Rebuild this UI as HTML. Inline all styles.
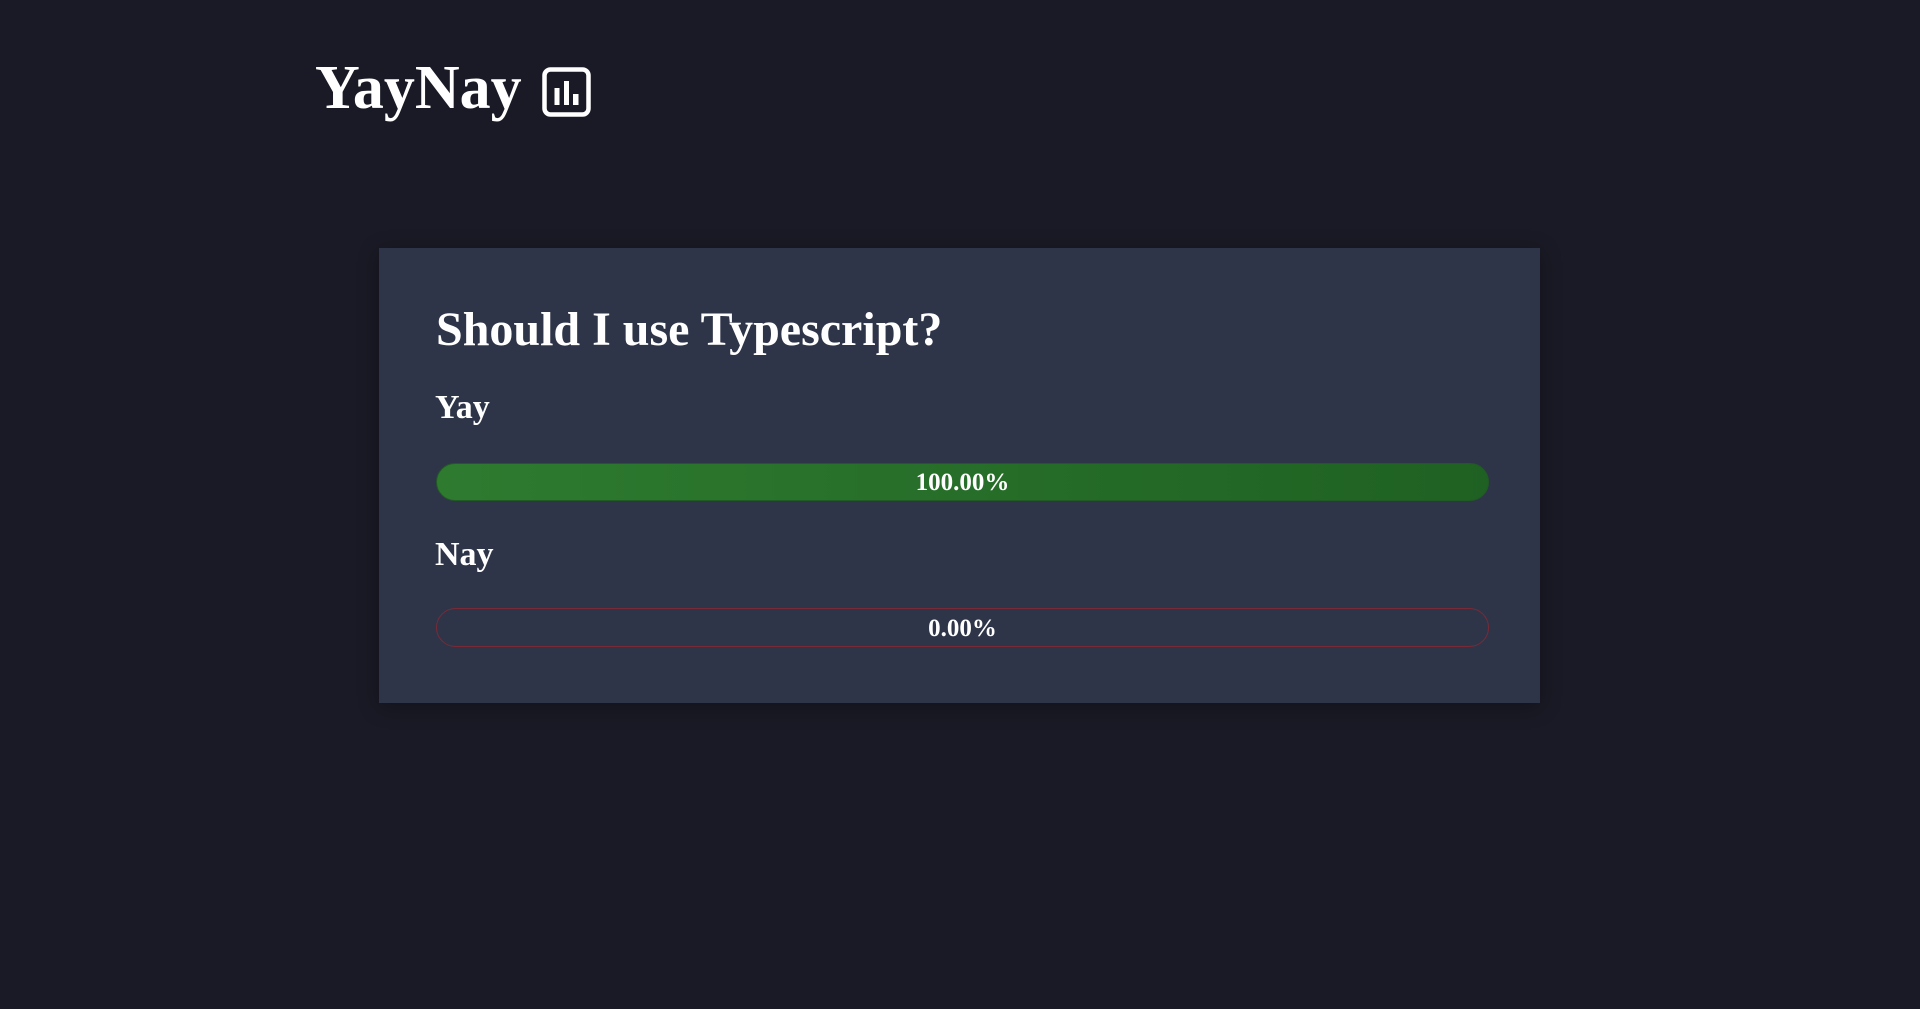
<!DOCTYPE html>
<html><head><meta charset="utf-8"><style>
html,body{margin:0;padding:0;width:1920px;height:1009px;background:#191a25;overflow:hidden;font-family:"Liberation Serif",serif;color:#fff}
.abs{position:absolute}
.logo{left:315px;top:48px;font-size:62px;font-weight:bold;line-height:80px}
.card{left:379px;top:248px;width:1161px;height:455px;background:#2e3548;box-shadow:0 4px 20px rgba(0,0,0,.3)}
.t{font-weight:bold;white-space:nowrap}
.bar{left:436px;width:1053px;border-radius:20px;text-align:center;font-weight:bold;font-size:25px;box-sizing:border-box}
</style></head><body>
<div class="abs logo t">YayNay</div>
<svg class="abs" style="left:541px;top:66px" width="51" height="51" viewBox="0 0 51 51">
<rect x="3.5" y="3.5" width="44" height="45" rx="6" fill="none" stroke="#fff" stroke-width="4.5"/>
<rect x="13.5" y="22" width="5" height="17" fill="#fff"/>
<rect x="23" y="15" width="5" height="24" fill="#fff"/>
<rect x="32" y="28" width="5.5" height="11" fill="#fff"/>
</svg>
<div class="abs card"></div>
<div class="abs t" style="left:436px;top:302px;font-size:48px;line-height:56px">Should I use Typescript?</div>
<div class="abs t" style="left:435px;top:388px;font-size:34px;line-height:40px">Yay</div>
<div class="abs bar" style="top:463px;height:38px;line-height:38px;background:linear-gradient(90deg,#2e7b30,#1f6122);border:1px solid #225a25">100.00%</div>
<div class="abs t" style="left:435px;top:535px;font-size:34px;line-height:40px">Nay</div>
<div class="abs bar" style="top:608px;height:39px;line-height:39px;border:1px solid #7a2a36">0.00%</div>
</body></html>
